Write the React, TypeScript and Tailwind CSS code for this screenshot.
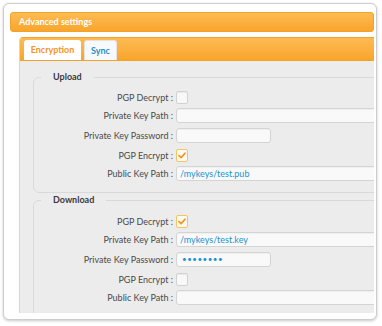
type Row = {
  label: string;
  kind: "check" | "path" | "password";
  value?: string;
  checked?: boolean;
  mt: string;
};

const upload: Row[] = [
  { label: "PGP Decrypt", kind: "check", checked: false, mt: "mt-[8px]" },
  { label: "Private Key Path", kind: "path", value: "", mt: "mt-[4px]" },
  { label: "Private Key Password", kind: "password", value: "", mt: "mt-[5px]" },
  { label: "PGP Encrypt", kind: "check", checked: true, mt: "mt-[6px]" },
  { label: "Public Key Path", kind: "path", value: "/mykeys/test.pub", mt: "mt-[4px]" },
];

const download: Row[] = [
  { label: "PGP Decrypt", kind: "check", checked: true, mt: "mt-[9px]" },
  { label: "Private Key Path", kind: "path", value: "/mykeys/test.key", mt: "mt-[4px]" },
  { label: "Private Key Password", kind: "password", value: "••••••••", mt: "mt-[5px]" },
  { label: "PGP Encrypt", kind: "check", checked: false, mt: "mt-[6px]" },
  { label: "Public Key Path", kind: "path", value: "", mt: "mt-[4px]" },
];

function Checkbox({ checked }: { checked?: boolean }) {
  if (checked) {
    return (
      <div className="flex h-[13px] w-[12px] items-center justify-center rounded-[2px] border border-[#f3c463] bg-[#fffaf0]">
        <svg width="8" height="7" viewBox="0 0 8 7">
          <path d="M1 3.6 L3.1 5.6 L7 1.2" fill="none" stroke="#f7941d" strokeWidth="1.7" strokeLinecap="round" strokeLinejoin="round" />
        </svg>
      </div>
    );
  }
  return <div className="h-[13px] w-[12px] rounded-[2px] border border-[#d2d2d2] bg-[#f8f8f8] shadow-[inset_0_1px_1px_rgba(0,0,0,0.06)]" />;
}

function Field({ row }: { row: Row }) {
  return (
    <div className={`flex items-center ${row.mt}`}>
      <span className="w-[139px] shrink-0 text-right text-[9px] leading-[13px] text-[#4a4a4a]">{row.label} :</span>
      <div className="ml-[3px] shrink-0">
        {row.kind === "check" && <Checkbox checked={row.checked} />}
        {row.kind === "path" && (
          <div className="h-[15px] w-[240px] rounded-[3px] border border-[#d4d4d4] bg-[#f9f9f9] pl-[3px] text-[9px] leading-[13px] text-[#1b92d1] shadow-[inset_0_1px_1px_rgba(0,0,0,0.04)]">
            {row.value}
          </div>
        )}
        {row.kind === "password" && (
          <div className="h-[15px] w-[95px] rounded-[3px] border border-[#d4d4d4] bg-[#f9f9f9] pl-[5px] text-[8px] leading-[13px] tracking-[0.5px] text-[#1b92d1] shadow-[inset_0_1px_1px_rgba(0,0,0,0.04)]">
            {row.value}
          </div>
        )}
      </div>
    </div>
  );
}

function Group({ title, rows, className }: { title: string; rows: Row[]; className: string }) {
  return (
    <fieldset className={`w-[400px] shrink-0 rounded-[6px] border border-[#d9d9d9] pb-[11px] ${className}`}>
      <legend className="ml-[7px] px-[12px] text-[9px] font-bold leading-[12px] text-[#3a3a3a]">{title}</legend>
      {rows.map((r) => (
        <Field key={r.label} row={r} />
      ))}
    </fieldset>
  );
}

export default function App() {
  return (
    <div className="h-[326px] w-[382px] bg-white pl-[3px] pt-[3px] font-['Lato','Liberation_Sans',sans-serif]">
      <div className="flex h-[317px] w-[374px] flex-col overflow-hidden rounded-[6px] border border-[#cdcdcd] bg-white pb-[6px] pl-[6px] pr-[2px] pt-[8px] shadow-[0_1px_3px_rgba(0,0,0,0.22)]">
        {/* Window header */}
        <div className="flex h-[20px] shrink-0 items-center rounded-[3px] border border-[#f1a22c] bg-gradient-to-b from-[#fdbb52] to-[#f9a52a] pl-[8px] text-[9px] font-bold text-white">
          Advanced settings
        </div>

        {/* Tabs panel */}
        <div className="ml-[9px] mt-[5px] flex min-h-0 flex-1 flex-col overflow-hidden rounded-tl-[4px] border-l border-[#d6d6d6] bg-[#ececec]">
          <div className="flex h-[24px] shrink-0 items-end gap-[3px] border-y border-[#f1a22c] bg-gradient-to-b from-[#fdbb52] to-[#f9a52a] pl-[4px]">
            <div className="flex h-[20px] w-[57px] items-center justify-center rounded-t-[3px] bg-white text-[9px] font-bold text-[#f7941d]">
              Encryption
            </div>
            <div className="flex h-[20px] w-[33px] items-center justify-center rounded-t-[3px] border border-b-0 border-[#e3e3e3] bg-[#f7f9fa] text-[9px] font-bold text-[#2a8fc6]">
              Sync
            </div>
          </div>

          <div className="flex min-h-0 flex-1 flex-col overflow-hidden pl-[13px] pt-[10px]">
            <Group title="Upload" rows={upload} className="" />
            <Group title="Download" rows={download} className="mt-[1px]" />
          </div>
        </div>
      </div>
    </div>
  );
}
